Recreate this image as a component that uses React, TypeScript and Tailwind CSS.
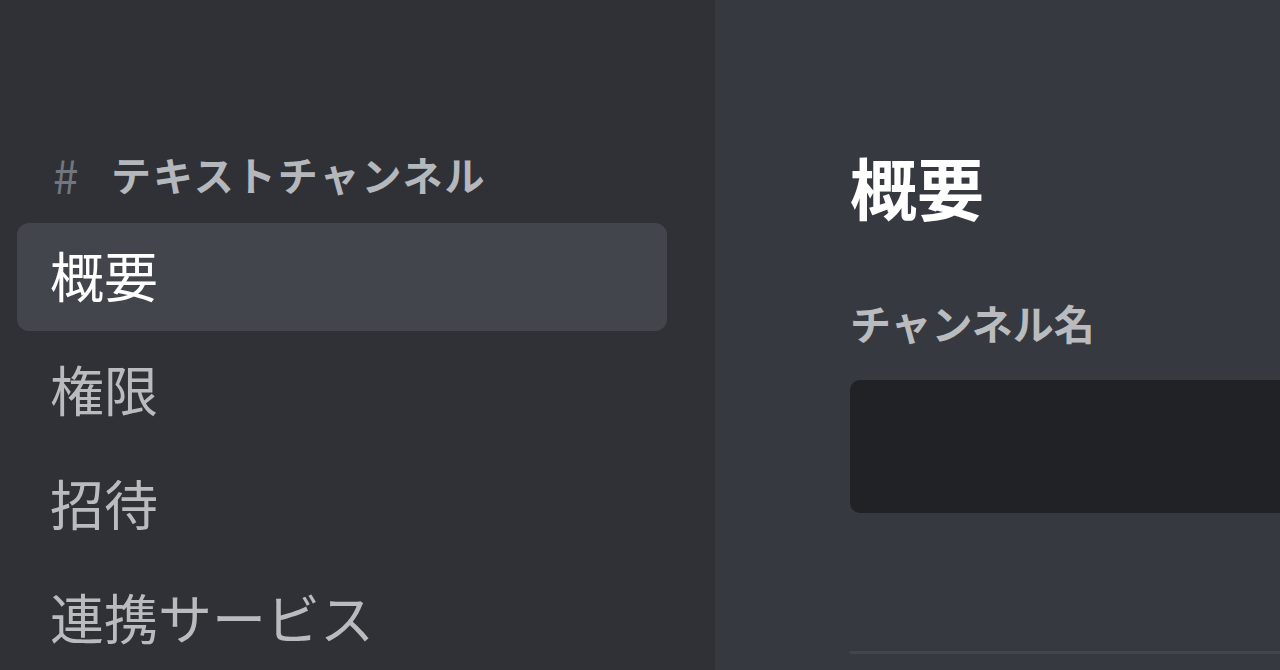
import React from 'react';

const font = { fontFamily: '"Noto Sans CJK JP", "Noto Sans", sans-serif' };

const navItems = ['概要', '権限', '招待', '連携サービス'];

const App = () => {
  const selected = 0;

  return (
    <div className="flex h-[670px] w-[1280px] overflow-hidden" style={font}>
      {/* sidebar */}
      <aside className="w-[715px] shrink-0 bg-[#2f3136] pl-[17px] pr-[48px] pt-[150px]">
        <div className="mb-[25px] flex h-[48px] items-center pl-[36px] leading-[48px]">
          <span className="w-[58px] text-[46px] font-normal text-[#72767d]">#</span>
          <span className="text-[40px] font-semibold tracking-[2px] text-[#b4b7bc]">テキストチャンネル</span>
        </div>
        <nav className="flex flex-col gap-[6px]">
          {navItems.map((item, i) => (
            <div
              key={item}
              className={
                i === selected
                  ? 'flex h-[108px] items-center rounded-[12px] bg-[#42454b] pb-[6px] pl-[33px] text-[54px] text-white'
                  : 'flex h-[108px] items-center rounded-[12px] pb-[6px] pl-[33px] text-[54px] text-[#b9bbbe]'
              }
            >
              {item}
            </div>
          ))}
        </nav>
      </aside>

      {/* content */}
      <main className="flex-1 bg-[#36393f] pl-[135px] pt-[146px]">
        <h1 className="text-[67px] font-bold leading-[80px] text-white">概要</h1>
        <div className="mt-[72px] text-[41px] font-semibold leading-[48px] text-[#b9bbbe]">チャンネル名</div>
        <div className="mt-[34px] h-[133px] w-[600px] rounded-l-[10px] bg-[#202225]" />
        <div className="mt-[138px] h-[3px] w-[600px] bg-[#42454a]" />
      </main>
    </div>
  );
};

export default App;
